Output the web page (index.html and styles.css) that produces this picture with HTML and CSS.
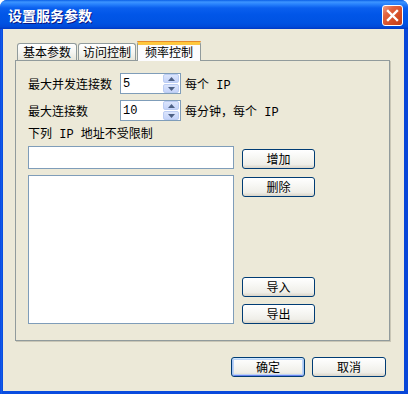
FILE: index.html
```html
<!DOCTYPE html>
<html lang="zh-CN">
<head>
    <meta charset="UTF-8">
    <title>设置服务参数</title>
    <link rel="stylesheet" href="styles.css">
</head>
<body>
    <div class="window">
        <div class="titlebar">
            <span class="title">设置服务参数</span>
            <span class="close">
                <svg width="19" height="19" viewBox="0 0 19 19"><path d="M5 5 L14 14 M14 5 L5 14" stroke="#fff" stroke-width="2.4" stroke-linecap="square"/></svg>
            </span>
        </div>
        <div class="client">
            <div class="tabs">
                <div class="tab tab-1">基本参数</div>
                <div class="tab tab-2">访问控制</div>
                <div class="tab tab-3 tab-selected">频率控制</div>
            </div>
            <div class="panel">
                <div class="row">
                    <span class="label">最大并发连接数</span>
                    <div class="spin">
                        <span class="spin-value">5</span>
                        <div class="spin-btns">
                            <span class="spin-btn"><svg width="7" height="4" viewBox="0 0 7 4"><path d="M0 4 L3.5 0 L7 4 Z" fill="#4d6185"/></svg></span>
                            <span class="spin-btn"><svg width="7" height="4" viewBox="0 0 7 4"><path d="M0 0 L3.5 4 L7 0 Z" fill="#4d6185"/></svg></span>
                        </div>
                    </div>
                    <span class="unit">每个 IP</span>
                </div>
                <div class="row">
                    <span class="label">最大连接数</span>
                    <div class="spin">
                        <span class="spin-value">10</span>
                        <div class="spin-btns">
                            <span class="spin-btn"><svg width="7" height="4" viewBox="0 0 7 4"><path d="M0 4 L3.5 0 L7 4 Z" fill="#4d6185"/></svg></span>
                            <span class="spin-btn"><svg width="7" height="4" viewBox="0 0 7 4"><path d="M0 0 L3.5 4 L7 0 Z" fill="#4d6185"/></svg></span>
                        </div>
                    </div>
                    <span class="unit">每分钟，每个 IP</span>
                </div>
                <div class="caption">下列 IP 地址不受限制</div>
                <div class="ip-area">
                    <div class="ip-left">
                        <div class="edit"></div>
                        <div class="list"></div>
                    </div>
                    <div class="ip-right">
                        <div class="btn-group">
                            <span class="btn">增加</span>
                            <span class="btn">删除</span>
                        </div>
                        <div class="btn-group">
                            <span class="btn">导入</span>
                            <span class="btn">导出</span>
                        </div>
                    </div>
                </div>
            </div>
            <div class="footer">
                <span class="btn btn-wide btn-default">确定</span>
                <span class="btn btn-wide">取消</span>
            </div>
        </div>
    </div>
</body>
</html>
```

FILE: styles.css
```css
*{
    margin: 0;
    padding: 0;
    box-sizing: border-box;
}
body{
    background: #ffffff;
    font-family: "Liberation Mono", "Noto Sans CJK SC", monospace;
    font-size: 12px;
    color: #000;
}
.window{
    width: 408px;
    height: 394px;
    display: flex;
    flex-direction: column;
    background: linear-gradient(to right, #0831d9 0, #166aee 1px, #0a4de0 2px, #0846d8 100%);
    border-radius: 7px 7px 0 0;
    overflow: hidden;
}
.titlebar{
    height: 29px;
    display: flex;
    align-items: center;
    justify-content: space-between;
    padding: 0 5px 0 8px;
    background: linear-gradient(to bottom, #0a5fe6 0, #3d95ff 2px, #2a84fd 4px, #0a5fee 8px, #0156e8 50%, #0052e2 80%, #004ad9 92%, #0038c4 100%);
}
.title{
    color: #fff;
    font-family: "Noto Sans CJK SC", sans-serif;
    font-weight: bold;
    font-size: 14px;
    line-height: 18px;
    text-shadow: 1px 1px 0 #0a1883;
    letter-spacing: 0px;
}
.close{
    width: 21px;
    height: 21px;
    margin-top: 1px;
    border: 1px solid #fff;
    border-radius: 3px;
    background: linear-gradient(135deg, #f0a088 0, #e2633f 30%, #d24a22 70%, #c13d18 100%);
    display: flex;
    align-items: center;
    justify-content: center;
}
.client{
    flex: 1;
    margin: 0 4px 3px 3px;
    background: #ece9d8;
    padding: 12px 14px 0 12px;
}

/* tabs */
.tabs{
    display: flex;
    align-items: flex-end;
    height: 19px;
    padding-left: 2px;
}
.tab{
    height: 17px;
    border: 1px solid #919b9c;
    border-bottom: none;
    border-radius: 3px 3px 0 0;
    background: linear-gradient(to bottom, #ffffff 0, #f6f6f2 50%, #e8e6da 100%);
    text-align: center;
    line-height: 16px;
    font-family: "Noto Sans CJK SC", sans-serif;
}
.tab-1{
    width: 60px;
}
.tab-2{
    width: 58px;
    margin-left: 1px;
}
.tab-3{
    width: 64px;
    margin-left: 1px;
}
.tab-selected{
    height: 20px;
    margin-bottom: -1px;
    position: relative;
    z-index: 2;
    background: #fcfcfe;
    border-top: 3px solid #ffc83c;
    box-shadow: inset 0 1px 0 #f9c64a;
    line-height: 16px;
}
.tab-selected::before{
    content: "";
    position: absolute;
    left: -1px;
    right: -1px;
    top: -3px;
    height: 1px;
    background: #e68b2c;
    border-radius: 3px 3px 0 0;
}
.panel{
    height: 281px;
    border: 1px solid #919b9c;
    box-shadow: 1px 1px 0 #c9c6b6;
    padding: 12px 0 0 12px;
}

/* rows */
.row{
    display: flex;
    align-items: center;
    height: 21px;
    margin-bottom: 6px;
}
.label{
    width: 92px;
}
.spin{
    width: 61px;
    height: 21px;
    border: 1px solid #7f9db9;
    background: #fff;
    display: flex;
    align-items: center;
    justify-content: space-between;
    padding: 0 1px 0 2px;
}
.spin-value{
    line-height: 14px;
}
.spin-btns{
    display: flex;
    flex-direction: column;
    gap: 1px;
    width: 16px;
}
.spin-btn{
    height: 9px;
    border: 1px solid #bccdf3;
    border-radius: 2px;
    background: linear-gradient(to bottom, #dbe5fc 0, #c4d3f9 100%);
    display: flex;
    align-items: center;
    justify-content: center;
}
.unit{
    margin-left: 4px;
}
.caption{
    height: 16px;
    line-height: 16px;
    margin-top: 5px;
    margin-bottom: 3px;
}

/* ip list */
.ip-area{
    display: grid;
    grid-template-columns: 206px 73px;
    column-gap: 8px;
}
.ip-left{
    display: flex;
    flex-direction: column;
    gap: 6px;
}
.edit{
    height: 23px;
    border: 1px solid #7f9db9;
    background: #fff;
}
.list{
    height: 149px;
    border: 1px solid #7f9db9;
    background: #fff;
}
.ip-right{
    display: flex;
    flex-direction: column;
    justify-content: space-between;
    padding-top: 3px;
}
.btn-group{
    display: flex;
    flex-direction: column;
    gap: 8px;
}
.btn-group + .btn-group{
    gap: 7px;
}
.btn{
    display: flex;
    align-items: center;
    justify-content: center;
    width: 73px;
    height: 20px;
    border: 1px solid #003c74;
    border-radius: 3px;
    background: linear-gradient(to bottom, #ffffff 0, #f7f7f4 40%, #efeee8 80%, #d9d4c8 100%);
    font-family: "Noto Sans CJK SC", sans-serif;
    line-height: 14px;
}

/* bottom buttons */
.footer{
    display: flex;
    justify-content: flex-end;
    gap: 7px;
    padding-top: 16px;
    padding-right: 4px;
}
.btn-wide{
    width: 74px;
}
.btn-default{
    box-shadow: inset 0 1px 0 #cee7ff, inset 1px 0 0 #a7c4f5, inset -1px 0 0 #a7c4f5, inset 0 -1px 0 #6982ee, inset 0 0 0 2px #bcd4f6;
}
```
